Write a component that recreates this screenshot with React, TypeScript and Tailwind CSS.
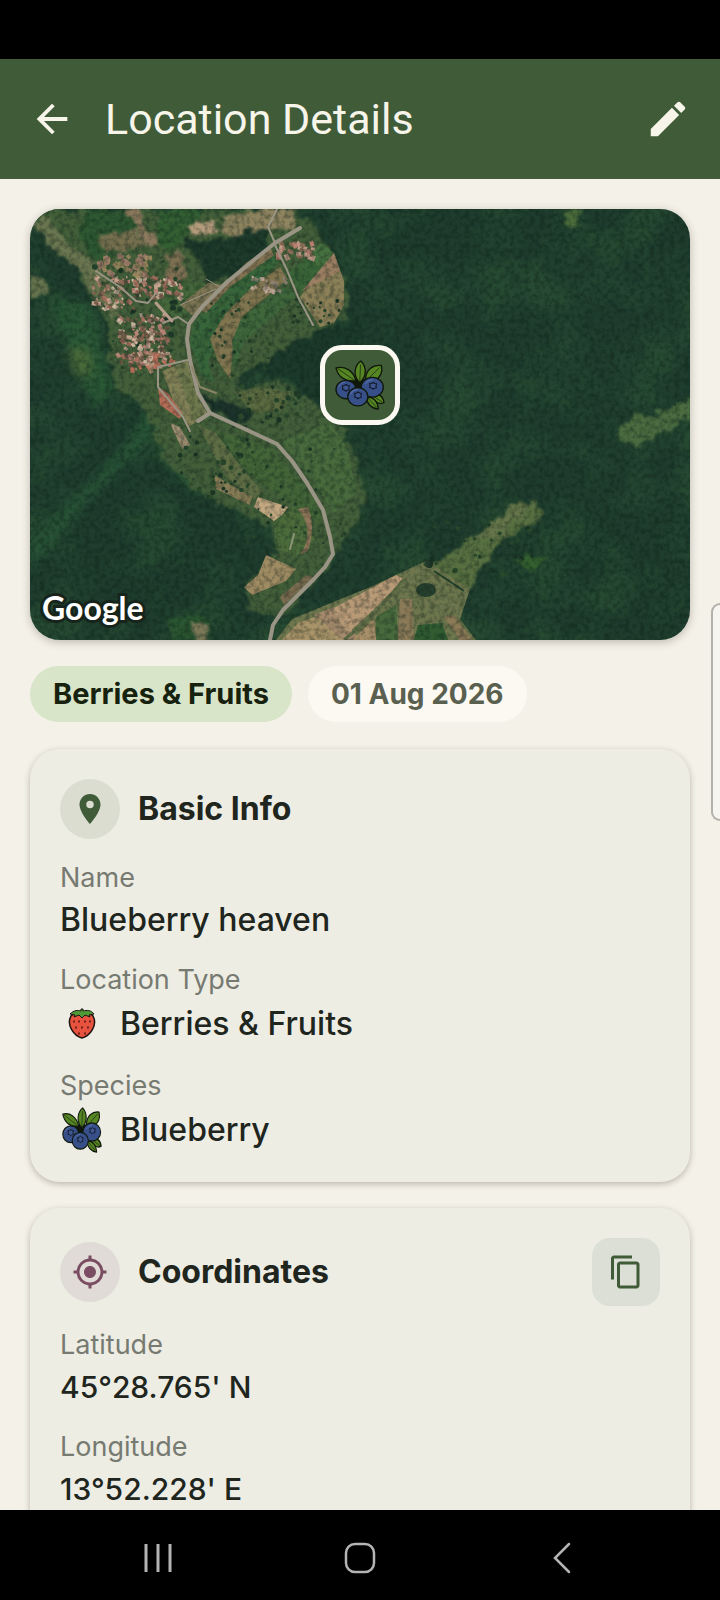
import type { ReactNode } from "react";
import {
  MdArrowBack,
  MdContentCopy,
  MdEdit,
  MdLocationOn,
  MdMyLocation,
} from "react-icons/md";

type Blob = { x: number; y: number; r: number; fill: string };

// Small seeded generator so the scattered trees and roofs stay put between renders
const scatter = (
  seed: number,
  count: number,
  area: [number, number, number, number],
  size: [number, number],
  fills: string[]
): Blob[] => {
  let s = seed;
  const next = () => {
    s = (s * 16807) % 2147483647;
    return s / 2147483647;
  };
  return Array.from({ length: count }, () => ({
    x: area[0] + next() * area[2],
    y: area[1] + next() * area[3],
    r: size[0] + next() * (size[1] - size[0]),
    fill: fills[Math.floor(next() * fills.length)],
  }));
};

const ROOFS = ["#b98477", "#a8705f", "#c9a893", "#8f6a58", "#d0b9a3", "#6c5b45", "#3f5236"];
const TREES = ["#1d3826", "#24442c", "#2b4a2c"];

const roofs = [
  ...scatter(11, 190, [88, 104, 48, 50], [1, 3], ROOFS),
  ...scatter(29, 80, [62, 66, 46, 32], [1, 3], ROOFS),
  ...scatter(37, 70, [106, 66, 44, 20], [1, 3], ROOFS),
  ...scatter(41, 34, [72, 44, 46, 18], [2, 4], ["#a08c62", "#8d7f58", "#9c7b68"]),
  ...scatter(53, 26, [250, 30, 34, 16], [2, 4], ["#b67f70", "#c39c88", "#8a6c57"]),
  ...scatter(59, 20, [222, 66, 36, 14], [1, 3], ["#bda695", "#8c8172"]),
  ...scatter(61, 24, [104, 142, 38, 18], [1, 3], ["#c0705a", "#b08a70"]),
];

const trees = [
  ...scatter(71, 40, [60, 50, 90, 110], [1, 3], TREES),
  ...scatter(73, 40, [180, 90, 60, 80], [1, 2], TREES),
  ...scatter(79, 44, [150, 215, 70, 80], [1, 3], TREES),
  ...scatter(83, 30, [215, 240, 100, 100], [1, 2], TREES),
  ...scatter(89, 30, [250, 90, 60, 25], [1, 2], TREES),
  ...scatter(97, 34, [395, 310, 110, 60], [1, 3], TREES),
  ...scatter(101, 30, [210, 175, 60, 40], [1, 3], TREES),
];

const MapPicture = () => (
  <svg
    viewBox="0 0 660 431"
    preserveAspectRatio="xMidYMid slice"
    className="absolute inset-0 h-full w-full"
    role="img"
    aria-label="Satellite map"
  >
    <defs>
      <filter id="canopy" x="0" y="0" width="100%" height="100%" colorInterpolationFilters="sRGB">
        <feTurbulence type="fractalNoise" baseFrequency="0.2" numOctaves="3" seed="4" />
        <feColorMatrix values="0 0 0 0 0.03  0 0 0 0 0.1  0 0 0 0 0.08  3 0 0 0 -1.2" />
      </filter>
      <filter id="patches" x="0" y="0" width="100%" height="100%" colorInterpolationFilters="sRGB">
        <feTurbulence type="fractalNoise" baseFrequency="0.02" numOctaves="5" seed="9" />
        <feColorMatrix values="0 0 0 0 0.2  0 0 0 0 0.37  0 0 0 0 0.22  0 3 0 0 -1.2" />
      </filter>
      <filter id="ragged" x="-5%" y="-5%" width="110%" height="110%" colorInterpolationFilters="sRGB">
        <feTurbulence type="fractalNoise" baseFrequency="0.09" numOctaves="3" seed="2" />
        <feDisplacementMap in="SourceGraphic" scale="14" xChannelSelector="R" yChannelSelector="G" />
        <feGaussianBlur stdDeviation="0.8" />
      </filter>
      <filter id="soft" colorInterpolationFilters="sRGB">
        <feGaussianBlur stdDeviation="0.7" />
      </filter>
      <filter id="scrub" colorInterpolationFilters="sRGB">
        <feGaussianBlur stdDeviation="5" />
      </filter>
    </defs>

    {/* forest */}
    <rect width="660" height="431" fill="#1f3d2e" />
    <rect width="660" height="431" filter="url(#patches)" opacity="0.4" />

    {/* lighter scrub */}
    <g filter="url(#scrub)">
      <path d="M20 90 62 96 84 180 66 200 44 150Z" fill="#2a5836" />
      <path d="M36 138 60 140 62 168 46 166Z" fill="#4a6b3a" />
      <path d="M120 195 136 215 60 290 0 360 0 335 95 235Z" fill="#285336" />
      <path d="M124 190 150 215 190 290 160 280 128 240Z" fill="#2f5c38" />
    </g>

    <g filter="url(#ragged)">
      <path d="M0 66 14 72 20 84 0 88Z" fill="#66744d" />
      <path d="M138 411 160 404 180 412 182 431 140 431Z" fill="#2b5631" />
      <path d="M160 412 178 416 180 431 164 431Z" fill="#7a7858" />

      {/* cleared valley */}
      <path
        d="M8 0 267 0 280 12 296 34 310 60 318 88 316 108 292 120 262 134 236 156 206 170 212 182 246 170 272 186 300 206 316 222 326 250 336 290 314 330 303 352 282 374 258 402 236 408 218 398 212 378 228 362 246 342 240 316 214 306 186 294 158 272 134 250 122 218 108 190 86 178 78 148 80 124 70 104 55 80 48 58 26 40 0 14Z"
        fill="#435f3a"
      />
      <path d="M55 0 100 0 124 36 90 44 62 50 50 26Z" fill="#2f5832" />
      <path d="M128 0 172 0 160 24 138 44 124 34Z" fill="#335f33" />
      <path d="M0 10 18 10 70 62 96 88 84 108 60 84 50 60 24 42Z" fill="#6a7650" />
      <path d="M96 0 108 0 128 36 118 38Z" fill="#8d7a5e" />
      <path d="M70 28 106 20 118 38 74 44Z" fill="#76704f" />
      <path d="M158 16 186 10 190 24 162 24Z" fill="#b39b7b" />
      <path d="M196 8 232 0 266 0 262 22 240 18 210 26 192 26Z" fill="#8f8460" />
      <path d="M136 46 152 42 158 72 140 76Z" fill="#7d6f52" />
      <path d="M153 32 190 31 215 22 236 20 238 40 206 68 180 74 168 52Z" fill="#1d3a2b" />
      <path d="M198 174 284 122 330 110 330 200 290 200 262 172 226 164Z" fill="#1c3a2b" />
      <path d="M170 188 196 190 224 206 206 214 184 202Z" fill="#1b332b" />
      <path d="M204 182 234 178 260 184 254 200 226 206Z" fill="#5b6a40" />
    </g>

    <g filter="url(#soft)">
      {/* fields between the roads */}
      <path d="M124 88 150 72 176 74 158 106 130 112Z" fill="#44663a" />
      <path d="M150 96 178 74 194 76 164 108Z" fill="#7c7453" />
      <path d="M226 48 242 40 248 54 204 98 178 152 184 174 172 166 160 134 164 114 198 76Z" fill="#38653a" />
      <path d="M216 54 240 38 244 46 200 78 176 104 170 100Z" fill="#837252" />
      <path d="M250 58 258 70 214 106 204 128 200 170 188 152 180 130 196 104 222 78Z" fill="#81754f" />
      <path d="M256 78 268 86 214 132 204 160 202 132 212 108Z" fill="#3f673b" />
      <path d="M256 66 278 48 290 56 292 64 270 84Z" fill="#3b6538" />
      <path d="M278 46 292 34 304 44 292 60Z" fill="#46703f" />
      <path d="M304 44 314 72 314 96 304 114 290 118 270 88Z" fill="#8b8058" />
      <path d="M304 44 310 62 272 82Z" fill="#9c7f62" />
      <path d="M132 162 158 152 166 186 178 206 158 218 144 194Z" fill="#818056" />
      <path d="M146 158 156 154 174 206 164 212Z" fill="#70794d" />
      <path d="M128 178 138 184 152 204 150 210 130 196Z" fill="#b56d57" />
      <path d="M168 216 186 224 214 262 232 282 224 290 196 268Z" fill="#5f6d45" />
      <path d="M186 222 240 238 262 262 288 296 292 316 250 288 216 262Z" fill="#436538" />
      <path d="M252 232 300 214 318 240 326 284 304 304 288 278Z" fill="#486a3d" />
      <path d="M140 214 150 218 160 236 152 240Z" fill="#a08f72" />
      <path d="M184 266 222 288 220 296 186 280Z" fill="#877c56" />
      <path d="M228 288 258 298 252 306 244 312 224 298Z" fill="#c4a982" />
      <path d="M262 298 276 300 284 330 268 346 246 340 244 314Z" fill="#4c6c3c" />
      <path d="M268 300Q286 322 270 346L278 342Q286 318 278 298Z" fill="#8f7659" />
      <path d="M236 346 266 360 256 372 222 386 214 378 228 366Z" fill="#a08c63" />
      <path d="M250 388 276 366 284 368 254 396Z" fill="#7b6c50" />
    </g>

    {/* south-east farmland */}
    <g filter="url(#ragged)">
      <path d="M410 350 450 324 482 296 508 292 512 306 482 326 458 340 456 352 438 382 426 410 400 431 360 431 372 372Z" fill="#586f41" />
      <path d="M446 328 482 296 504 294 470 328Z" fill="#66764a" />
      <path d="M490 344 512 348 508 362 490 358Z" fill="#35602f" />
      <path d="M588 222 604 208 626 206 640 198 664 190 664 206 632 222 622 232 606 236 590 230Z" fill="#4b6b40" />
      <path d="M532 2 552 2 550 18 540 16Z" fill="#4b6b3b" />
    </g>
    <g filter="url(#soft)">
      <path d="M246 431 262 410 340 378 366 366 396 352 440 380 430 410 446 431Z" fill="#6d764d" />
      <path d="M252 431 268 414 296 404 314 431Z" fill="#a99469" />
      <path d="M284 406 304 398 330 431 312 431Z" fill="#a58a6c" />
      <path d="M302 400 366 366 374 370 342 402 318 424Z" fill="#b99a77" />
      <path d="M322 431 344 410 346 431Z" fill="#a9906a" />
      <path d="M346 408 366 396 368 431 346 431Z" fill="#47693c" />
      <path d="M370 390 382 390 384 431 368 431Z" fill="#8a7a58" />
      <path d="M414 408 424 406 442 431 430 431Z" fill="#8c7a57" />
      <path d="M388 416 412 414 418 431 384 431Z" fill="#315c31" />
      <path d="M404 362 434 382" stroke="#24402a" strokeWidth="2" fill="none" />
      <path d="M314 431 346 404 374 370" stroke="#5c6a45" strokeWidth="3" fill="none" />
      <ellipse cx="396" cy="381" rx="10" ry="7" fill="#263f2c" />
      <circle cx="399" cy="355" r="4" fill="#22382a" />
    </g>

    <g filter="url(#soft)">
      {trees.map((t, i) => (
        <circle key={i} cx={t.x} cy={t.y} r={t.r} fill={t.fill} />
      ))}
      {roofs.map((b, i) => (
        <rect
          key={i}
          x={b.x}
          y={b.y}
          width={b.r * 2}
          height={b.r * 1.5}
          fill={b.fill}
          transform={`rotate(${(i * 37) % 90} ${b.x} ${b.y})`}
        />
      ))}
    </g>

    {/* canopy grain */}
    <rect width="660" height="431" filter="url(#canopy)" opacity="0.32" />

    {/* roads */}
    <g fill="none" stroke="#9a9484" strokeLinejoin="round" strokeLinecap="round" filter="url(#soft)">
      <path d="M270 19 245 34 230 46 197 73 172 98 159 115 157 130 160 151 168 184 180 204" strokeWidth="4" />
      <path d="M168 212 180 204 217 221 247 235 262 252 277 274 293 301 300 328 303 345 295 358 283 371 253 401 243 416 240 431" strokeWidth="4" />
      <path d="M245 34 238 18 247 0" strokeWidth="2" />
      <path d="M245 36 257 61 268 88 283 116" strokeWidth="2" />
      <path d="M157 114 148 108 133 114" strokeWidth="2" />
      <path d="M158 151 128 158 128 178 153 208 160 222" strokeWidth="2" />
      <path d="M66 62 90 78 106 92 118 94 126 84" strokeWidth="2" />
      <path d="M162 158 170 178 186 184" strokeWidth="2" stroke="#8b8466" />
      <path d="M126 94 142 112" strokeWidth="3" stroke="#b99d8c" />
      <path d="M176 70 190 78M186 80 150 96" strokeWidth="1" />
      <path d="M264 325 260 340" strokeWidth="2" stroke="#8c9479" />
    </g>
  </svg>
);

const Calyx = ({ x, y }: { x: number; y: number }) => (
  <path
    d={`M${x} ${y - 8}l4 3 6 1-2 6 1 6-6 1-4 3-4-4-6-1 2-6-2-5 6-1Z`}
    fill="#3f578f"
    stroke="#0e1422"
    strokeWidth="3"
    strokeLinejoin="round"
  />
);

const BlueberryIcon = ({ className }: { className: string }) => (
  <svg viewBox="75 73 149 147" preserveAspectRatio="none" className={className} aria-hidden="true">
    <path d="M120 130 150 128 180 130 190 185 150 190 120 170Z" fill="#10180c" />
    <g stroke="#10180c" strokeWidth="4" strokeLinejoin="round" strokeLinecap="round">
      <g fill="#568523">
        <path d="M78 96C104 90 130 104 137 134 108 138 84 124 78 96Z" />
        <path d="M149 140C126 118 134 88 152 76 170 94 170 120 149 140Z" />
        <path d="M166 130C166 102 188 86 213 89 219 112 206 128 190 136Z" />
        <path d="M184 176C202 168 218 178 221 198 210 204 196 198 186 186Z" />
        <path d="M168 182C186 180 202 192 204 217 184 216 170 202 168 182Z" />
      </g>
      <g fill="none" strokeWidth="2">
        <path d="M84 99 132 132M151 88 149 134M207 96 174 128M190 180 215 196M174 186 198 211" />
      </g>
      <g fill="#38508a">
        <ellipse cx="108" cy="160" rx="30" ry="27" />
        <ellipse cx="186" cy="153" rx="33" ry="29" />
        <ellipse cx="143" cy="181" rx="30" ry="27" />
      </g>
    </g>
    <g fill="none" stroke="#5870ab" strokeWidth="3" strokeLinecap="round">
      <path d="M86 152Q92 139 104 138M166 143Q174 131 188 130M122 173Q128 161 141 160" />
    </g>
    <Calyx x={108} y={153} />
    <Calyx x={189} y={147} />
    <Calyx x={144} y={175} />
  </svg>
);

const StrawberryIcon = () => (
  <svg viewBox="0 0 44 44" className="h-11 w-11" aria-hidden="true">
    <path
      d="M11 14C6 23 14 34 22 36 30 34 38 23 33 14 29 9 15 9 11 14Z"
      fill="#e8533f"
      stroke="#1b1410"
      strokeWidth="1.5"
    />
    <path
      d="M10 12C14 8 18 8 21 9L21 7 23 7 23 9C27 8 31 8 34 12L29 13 30 15 25 13 22 16 19 13 14 15 15 13Z"
      fill="#4f9a35"
      stroke="#1b1410"
      strokeLinejoin="round"
    />
    <g stroke="#4a1510" strokeWidth="1.5" strokeLinecap="round">
      <path d="M14 19v1M19 19v1M25 19v1M30 19v1M16 25v1M22 25v1M28 25v1M19 31v1M25 31v1" />
    </g>
  </svg>
);

type FieldProps = { label: string; value: string; icon?: ReactNode; numeric?: boolean };

const Field = ({ label, value, icon, numeric }: FieldProps) => (
  <div>
    <dt className="text-[27px] leading-9 text-[#777a71]">{label}</dt>
    <dd
      className={`mt-1 flex items-center gap-4 leading-10 font-medium text-[#20251d] ${
        icon ? "h-11" : "h-10"
      } ${numeric ? "text-[30px]" : "text-[32px]"}`}
    >
      {icon}
      {value}
    </dd>
  </div>
);

const Card = ({ header, children }: { header: ReactNode; children: ReactNode }) => (
  <section className="rounded-[30px] bg-[#edede4] p-[30px] shadow-[0_2px_6px_rgba(60,50,30,0.3)]">
    <div className="mb-[21px] flex items-center">{header}</div>
    <dl className="space-y-[22px]">{children}</dl>
  </section>
);

const App = () => {
  return (
    <div className="relative flex h-screen flex-col overflow-hidden bg-[#f4f1e9] font-['Inter',sans-serif]">
      <div className="h-[59px] shrink-0 bg-black" />

      <header className="flex h-[120px] shrink-0 items-center bg-[#3f5b37] px-[29px] text-[#f7f4ea]">
        <button type="button" aria-label="Back">
          <MdArrowBack size={46} />
        </button>
        <h1 className="ml-[30px] flex-1 font-['Roboto',sans-serif] text-[43px] leading-none">
          Location Details
        </h1>
        <button type="button" aria-label="Edit">
          <MdEdit size={46} />
        </button>
      </header>

      <main className="min-h-0 flex-1 overflow-y-auto px-[30px] pt-[30px] pb-8 [scrollbar-width:none]">
        <div className="relative h-[431px] overflow-hidden rounded-[30px] shadow-[0_2px_8px_rgba(60,50,30,0.3)]">
          <MapPicture />
          <div className="absolute top-[136px] left-1/2 flex h-20 w-20 -translate-x-1/2 items-center justify-center rounded-[22px] border-[5px] border-[#fbf9f2] bg-[#3f5b37]">
            <BlueberryIcon className="h-[50px] w-[50px]" />
          </div>
          <span className="absolute bottom-3 left-3 font-['Lato',sans-serif] text-[32px] leading-10 font-bold text-white [-webkit-text-stroke:6px_#16241b] [paint-order:stroke_fill]">
            Google
          </span>
        </div>

        <div className="mt-[26px] flex gap-4 leading-[56px] font-bold">
          <span className="rounded-full bg-[#d8e5c9] px-[23px] text-[29px] text-[#16210e]">
            Berries & Fruits
          </span>
          <span className="rounded-full bg-[#fbf9f2] px-[23px] text-[28px] text-[#5a604f]">
            01 Aug 2026
          </span>
        </div>

        <div className="mt-[27px] space-y-[26px]">
          <Card
            header={
              <>
                <span className="flex h-[60px] w-[60px] items-center justify-center rounded-full bg-[#dbddd1] text-[#3f5b37]">
                  <MdLocationOn size={36} />
                </span>
                <h2 className="ml-[18px] text-[32px] font-bold text-[#20251d]">Basic Info</h2>
              </>
            }
          >
            <Field label="Name" value="Blueberry heaven" />
            <Field label="Location Type" value="Berries & Fruits" icon={<StrawberryIcon />} />
            <Field
              label="Species"
              value="Blueberry"
              icon={
                <span className="flex w-11 justify-center">
                  <BlueberryIcon className="h-[46px] w-10" />
                </span>
              }
            />
          </Card>

          <Card
            header={
              <>
                <span className="flex h-[60px] w-[60px] items-center justify-center rounded-full bg-[#e0dbd6] text-[#7a4d62]">
                  <MdMyLocation size={36} />
                </span>
                <h2 className="ml-[18px] flex-1 text-[32px] font-bold text-[#20251d]">Coordinates</h2>
                <button
                  type="button"
                  aria-label="Copy coordinates"
                  className="flex h-[68px] w-[68px] items-center justify-center rounded-[18px] bg-[#dcdfd5] text-[#3f5b37]"
                >
                  <MdContentCopy size={36} />
                </button>
              </>
            }
          >
            <Field label="Latitude" value="45°28.765' N" numeric />
            <Field label="Longitude" value="13°52.228' E" numeric />
          </Card>
        </div>
      </main>

      {/* edge panel handle */}
      <div className="absolute top-[603px] right-0 h-[218px] w-[9px] rounded-l-[10px] border-2 border-r-0 border-[#b3b1ab] bg-[#f7f5ef]" />

      <nav className="grid h-[90px] shrink-0 grid-cols-3 bg-black px-[57px] pt-1.5 text-[#b4b4b4]">
        <button type="button" aria-label="Recent apps" className="flex items-center justify-center">
          <svg viewBox="0 0 32 32" className="h-8 w-8" fill="none" stroke="currentColor" strokeWidth="3">
            <path d="M4 2v28M16 2v28M28 2v28" />
          </svg>
        </button>
        <button type="button" aria-label="Home" className="flex items-center justify-center">
          <svg viewBox="0 0 32 32" className="h-8 w-8" fill="none" stroke="currentColor" strokeWidth="2.5">
            <rect x="2" y="2" width="28" height="28" rx="9" />
          </svg>
        </button>
        <button type="button" aria-label="Back to previous app" className="flex items-center justify-center">
          <svg
            viewBox="0 0 32 32"
            className="h-8 w-8"
            fill="none"
            stroke="currentColor"
            strokeWidth="2.5"
            strokeLinecap="round"
          >
            <path d="M23 2 9 16l14 14" />
          </svg>
        </button>
      </nav>
    </div>
  );
};

export default App;
